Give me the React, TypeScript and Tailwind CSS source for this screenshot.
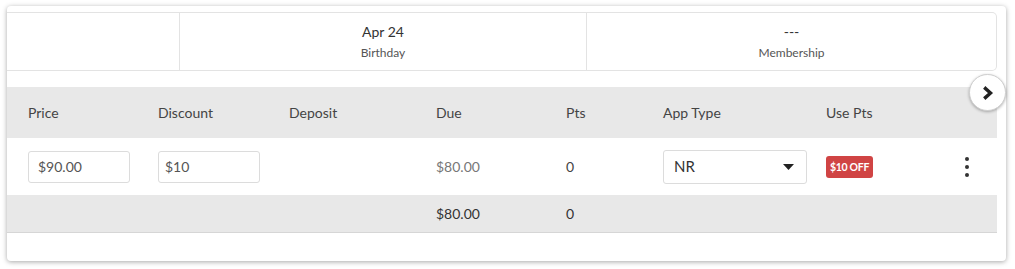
import React from "react";

const cols = [
  { label: "Price", w: "w-[130px]" },
  { label: "Discount", w: "w-[131px]" },
  { label: "Deposit", w: "w-[147px]" },
  { label: "Due", w: "w-[130px]" },
  { label: "Pts", w: "w-[97px]" },
  { label: "App Type", w: "w-[163px]" },
  { label: "Use Pts", w: "w-[120px]" },
];

function Chevron() {
  return (
    <svg width="14" height="14" viewBox="0 0 14 14" fill="none">
      <path d="M4.5 2.5 L9.5 7 L4.5 11.5" stroke="#222" strokeWidth="3.4" strokeLinecap="square" strokeLinejoin="miter" />
    </svg>
  );
}

export default function App() {
  return (
    <div className="w-[1015px] h-[269px] bg-white pt-[6px] pl-[7px] font-['Lato',sans-serif] text-[#444]">
      <div className="relative w-[999px] h-[255px] bg-white rounded-[4px] shadow-[0_1px_5px_rgba(0,0,0,0.35)]">
        <div className="mr-[9px] pt-[6px]">
          {/* summary strip */}
          <div className="flex h-[59px] border border-l-0 border-[#e3e3e3] rounded-r-[5px]">
            <div className="w-[173px] border-r border-[#e3e3e3]" />
            <div className="w-[407px] border-r border-[#e3e3e3] flex flex-col items-center justify-center">
              <span className="text-[14px] leading-[18px] text-[#333]">Apr 24</span>
              <span className="text-[12px] leading-[16px] mt-[4px] text-[#555]">Birthday</span>
            </div>
            <div className="flex-1 flex flex-col items-center justify-center">
              <span className="text-[14px] leading-[18px] text-[#333]">---</span>
              <span className="text-[12px] leading-[16px] mt-[4px] text-[#555]">Membership</span>
            </div>
          </div>

          {/* table */}
          <div className="mt-[16px]">
            <div className="flex items-center h-[51px] bg-[#e8e8e8] pl-[21px] text-[14px] text-[#444]">
              {cols.map((c) => (
                <div key={c.label} className={c.w}>{c.label}</div>
              ))}
            </div>
            <div className="flex items-center h-[57px] pl-[21px] text-[14px]">
              <div className="w-[130px]">
                <div className="w-[102px] h-[32px] border border-[#dcdcdc] rounded-[3px] flex items-center px-[9px] text-[#555]">$90.00</div>
              </div>
              <div className="w-[131px]">
                <div className="w-[102px] h-[32px] border border-[#dcdcdc] rounded-[3px] flex items-center px-[6px] text-[#555]">$10</div>
              </div>
              <div className="w-[147px]" />
              <div className="w-[130px] text-[#777]">$80.00</div>
              <div className="w-[97px] text-[#444]">0</div>
              <div className="w-[163px]">
                <div className="w-[144px] h-[34px] border border-[#dcdcdc] rounded-[3px] flex items-center justify-between pl-[10px] pr-[12px] text-[15px] text-[#333]">
                  <span>NR</span>
                  <svg width="11" height="6" viewBox="0 0 11 6"><path d="M0 0 H11 L5.5 6 Z" fill="#222" /></svg>
                </div>
              </div>
              <div className="w-[120px]">
                <span className="inline-flex items-center h-[22px] px-[4px] rounded-[3px] bg-[#d04444] text-white text-[10.5px] font-bold tracking-[-0.3px]">$10 OFF</span>
              </div>
              <div className="flex-1 flex justify-end pr-[28px]">
                <div className="flex flex-col gap-[4px] items-center">
                  <span className="w-[4px] h-[4px] rounded-full bg-[#333]" />
                  <span className="w-[4px] h-[4px] rounded-full bg-[#333]" />
                  <span className="w-[4px] h-[4px] rounded-full bg-[#333]" />
                </div>
              </div>
            </div>
            <div className="flex items-center h-[38px] bg-[#e8e8e8] border-b border-[#d6d6d6] pl-[21px] text-[14px] text-[#333]">
              <div className="w-[408px]" />
              <div className="w-[130px]">$80.00</div>
              <div className="w-[97px]">0</div>
            </div>
          </div>
        </div>

        <button className="absolute left-[962px] top-[68px] w-[37px] h-[37px] rounded-full bg-white border border-[#cfcfcf] shadow-[0_1px_3px_rgba(0,0,0,0.3)] flex items-center justify-center">
          <Chevron />
        </button>
      </div>
    </div>
  );
}
